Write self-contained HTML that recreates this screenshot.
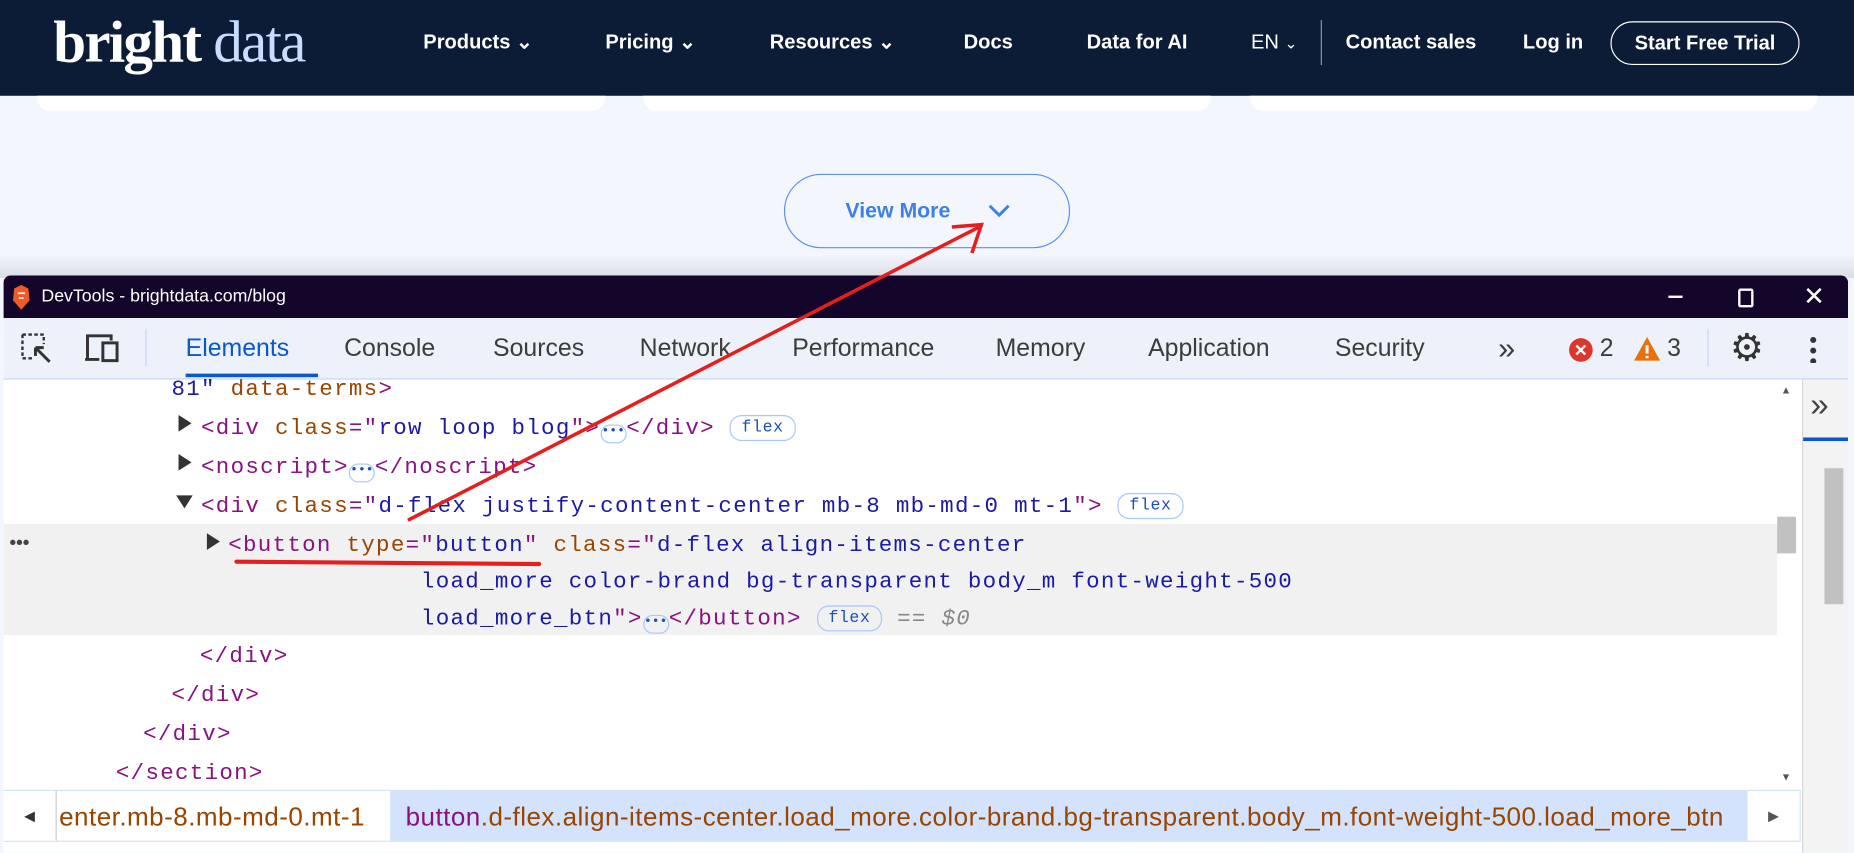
<!DOCTYPE html>
<html><head><meta charset="utf-8"><style>
html,body{margin:0;padding:0;width:1854px;height:852px;overflow:hidden;background:#f3f7fd}
#w{position:absolute;left:0;top:0;width:1568px;height:721px;transform:scale(1.18240);transform-origin:0 0;font-family:"Liberation Sans",sans-serif;background:#f3f7fd;overflow:hidden}
.a{position:absolute;white-space:nowrap}
.nav{position:absolute;left:0;top:0;width:1568px;height:81px;background:#0c1b36}
.ni{position:absolute;top:26px;color:#fff;font-size:17px;font-weight:bold}
.card{position:absolute;top:60px;height:34px;background:#fff;border-radius:0 0 12px 12px}
.tb{position:absolute;top:283px;font-size:21px;color:#3c3c3c}
.c{position:absolute;font-family:"Liberation Mono",monospace;font-size:19px;letter-spacing:1.1px;white-space:nowrap;line-height:24px}
.t{color:#881280}.n{color:#994500}.v{color:#1a1aa6}
.badge{display:inline-block;border:1.5px solid #a8c7fa;border-radius:10px;font-size:14px;color:#1a4fbf;padding:0 9px;line-height:20px;letter-spacing:0.5px;vertical-align:2px}
.dots{display:inline-block;border:1.5px solid #a8c7fa;border-radius:8px;width:20px;height:14px;vertical-align:0;font-size:11px;line-height:10px;text-align:center;color:#1a4fbf;letter-spacing:0}
.tri{position:absolute;width:0;height:0;border-top:7px solid transparent;border-bottom:7px solid transparent;border-left:11px solid #333}
</style></head><body><div id="w">
<div class="nav">
 <div class="a" style="left:45px;top:6px;font-family:'Liberation Serif',serif;font-size:50px;font-weight:bold;color:#fff;letter-spacing:-1.5px">bright <span style="color:#c9dcff;font-weight:normal">data</span></div>
 <div class="ni" style="left:358px">Products ⌄</div>
 <div class="ni" style="left:512px">Pricing ⌄</div>
 <div class="ni" style="left:651px">Resources ⌄</div>
 <div class="ni" style="left:815px">Docs</div>
 <div class="ni" style="left:919px">Data for AI</div>
 <div class="ni" style="left:1058px;font-weight:normal">EN <span style="font-size:13px">⌄</span></div>
 <div class="a" style="left:1117px;top:17px;width:1px;height:38px;background:#8a94a8"></div>
 <div class="ni" style="left:1138px">Contact sales</div>
 <div class="ni" style="left:1288px">Log in</div>
 <div class="a" style="left:1362px;top:18px;width:158px;height:35px;border:1.5px solid #fff;border-radius:20px;color:#fff;font-weight:bold;font-size:17px;text-align:center;line-height:35px">Start Free Trial</div>
</div>
<div class="card" style="left:31px;width:481px;top:81px;height:13px"></div>
<div class="card" style="left:544px;width:480px;top:81px;height:13px"></div>
<div class="card" style="left:1057px;width:480px;top:81px;height:13px"></div>
<div class="a" style="left:663px;top:147px;width:240px;height:61px;border:1.5px solid #5b8ff0;border-radius:32px"></div>
<div class="a" style="left:715px;top:168px;color:#3d7fe9;font-size:18px;font-weight:bold">View More</div>
<svg class="a" style="left:834px;top:170px" width="22" height="16"><path d="M3 4 L11 12 L19 4" fill="none" stroke="#3d7fe9" stroke-width="2.5"/></svg>
<div class="a" style="left:0;top:215px;width:1568px;height:20px;background:linear-gradient(#f3f7fd,#d8dce4)"></div>
<!-- devtools -->
<div class="a" style="left:3px;top:233px;width:1560px;height:488px;background:#fff;border-radius:6px 6px 0 0;overflow:hidden">
 <div class="a" style="left:0;top:0;width:1560px;height:36px;background:#14052a"></div>
 <svg class="a" style="left:7px;top:8px" width="16" height="22"><path d="M2 3 L8 0 L14 3 L15 13 L8 21 L1 13Z" fill="#f05a26"/><path d="M5 7h6M6 11h4" stroke="#fff" stroke-width="1.5"/></svg>
 <div class="a" style="left:32px;top:9px;color:#fff;font-size:15px">DevTools - brightdata.com/blog</div>
 <div class="a" style="left:1408px;top:17px;width:12px;height:2px;background:#fff"></div>
 <div class="a" style="left:1467px;top:11px;width:9px;height:12px;border:2px solid #fff;border-radius:2px"></div>
 <div class="a" style="left:1522px;top:5px;color:#fff;font-size:22px">✕</div>
 <div class="a" style="left:0;top:36px;width:1560px;height:51px;background:#edf2fa;border-bottom:1px solid #c6d6f0"></div>
 <svg class="a" style="left:14px;top:48px" width="30" height="30"><path d="M2 2h18v8M2 2v20h8" fill="none" stroke="#333" stroke-width="2" stroke-dasharray="3 2"/><path d="M13 13 L25 25 M13 13h7M13 13v7" stroke="#333" stroke-width="2.5" fill="none"/></svg>
 <svg class="a" style="left:68px;top:48px" width="34" height="28"><path d="M3 22V3h20v4M1 23h12" fill="none" stroke="#333" stroke-width="2.5"/><rect x="16" y="9" width="12" height="15" fill="none" stroke="#333" stroke-width="2.5"/></svg>
 <div class="a" style="left:120px;top:45px;width:1px;height:32px;background:#c6d6f0"></div>
 <div class="tb" style="left:154px;top:50px;color:#0b57d0">Elements</div>
 <div class="a" style="left:154px;top:83px;width:112px;height:3px;background:#0b57d0"></div>
 <div class="tb" style="left:288px;top:50px">Console</div>
 <div class="tb" style="left:414px;top:50px">Sources</div>
 <div class="tb" style="left:538px;top:50px">Network</div>
 <div class="tb" style="left:667px;top:50px">Performance</div>
 <div class="tb" style="left:839px;top:50px">Memory</div>
 <div class="tb" style="left:968px;top:50px">Application</div>
 <div class="tb" style="left:1126px;top:50px">Security</div>
 <div class="tb" style="left:1264px;top:46px;font-size:26px">»</div>
 <div class="a" style="left:1324px;top:53px;width:20px;height:20px;border-radius:50%;background:#dc362e;color:#fff;font-size:14px;text-align:center;line-height:20px;font-weight:bold">✕</div>
 <div class="tb" style="left:1350px;top:50px">2</div>
 <svg class="a" style="left:1378px;top:51px" width="24" height="22"><path d="M12 1 L23 21 H1Z" fill="#e8710a"/><path d="M12 8v7M12 17v2" stroke="#fff" stroke-width="2.5"/></svg>
 <div class="tb" style="left:1407px;top:50px">3</div>
 <div class="a" style="left:1441px;top:45px;width:1px;height:32px;background:#c6d6f0"></div>
 <div class="a" style="left:1460px;top:42px;font-size:32px;color:#333">⚙</div>
 <div class="a" style="left:1528px;top:50px;width:5px;height:24px;background:radial-gradient(circle,#333 2.4px,transparent 2.6px) 0 0/5px 9px"></div>
 <!-- code -->
 <div class="a" style="left:0;top:210px;width:1500px;height:94px;background:#f1f1f1"></div>
 <div class="a" style="left:5px;top:218px;font-size:16px;color:#444;font-weight:bold">•••</div>
 <div class="c" style="left:142px;top:84px"><span class="v">81"</span> <span class="n">data-terms</span><span class="t">&gt;</span></div>
 <div class="tri" style="left:148px;top:118px"></div>
 <div class="c" style="left:167px;top:117px"><span class="t">&lt;div</span> <span class="n">class</span><span class="t">="</span><span class="v">row loop blog</span><span class="t">"&gt;</span><span class="dots">•••</span><span class="t">&lt;/div&gt;</span> <span class="badge">flex</span></div>
 <div class="tri" style="left:148px;top:151px"></div>
 <div class="c" style="left:167px;top:150px"><span class="t">&lt;noscript&gt;</span><span class="dots">•••</span><span class="t">&lt;/noscript&gt;</span></div>
 <div class="a" style="left:146px;top:186px;border-left:7px solid transparent;border-right:7px solid transparent;border-top:11px solid #333"></div>
 <div class="c" style="left:167px;top:183px"><span class="t">&lt;div</span> <span class="n">class</span><span class="t">="</span><span class="v">d-flex justify-content-center mb-8 mb-md-0 mt-1</span><span class="t">"&gt;</span> <span class="badge">flex</span></div>
 <div class="tri" style="left:172px;top:218px"></div>
 <div class="c" style="left:190px;top:216px"><span class="t">&lt;button</span> <span class="n">type</span><span class="t">="</span><span class="v">button</span><span class="t">"</span> <span class="n">class</span><span class="t">="</span><span class="v">d-flex align-items-center</span></div>
 <div class="c" style="left:353px;top:247px"><span class="v">load_more color-brand bg-transparent body_m font-weight-500</span></div>
 <div class="c" style="left:353px;top:278px"><span class="v">load_more_btn</span><span class="t">"&gt;</span><span class="dots">•••</span><span class="t">&lt;/button&gt;</span> <span class="badge">flex</span> <span style="color:#888;font-style:italic">== $0</span></div>
 <div class="c t" style="left:166px;top:310px">&lt;/div&gt;</div>
 <div class="c t" style="left:142px;top:343px">&lt;/div&gt;</div>
 <div class="c t" style="left:118px;top:376px">&lt;/div&gt;</div>
 <div class="c t" style="left:95px;top:409px">&lt;/section&gt;</div>
 <!-- scrollbar -->
 <div class="a" style="left:1500px;top:88px;width:20px;height:347px;background:#fff"></div>
 <div class="a" style="left:1500px;top:204px;width:16px;height:31px;background:#c1c1c1"></div>
 <div class="a" style="left:1503px;top:92px;font-size:9px;color:#555">▲</div>
 <div class="a" style="left:1503px;top:419px;font-size:9px;color:#555">▼</div>
 <div class="a" style="left:1521px;top:88px;width:39px;height:400px;background:#f3f3f3;border-left:1px solid #d8d8d8"></div>
 <div class="a" style="left:1528px;top:94px;font-size:28px;color:#444">»</div>
 <div class="a" style="left:1522px;top:137px;width:38px;height:3px;background:#0b57d0"></div>
 <div class="a" style="left:1540px;top:163px;width:16px;height:115px;background:#c1c1c1"></div>
 <!-- breadcrumb -->
 <div class="a" style="left:0;top:435px;width:1520px;height:44px;background:#d3e3fd"></div>
 <div class="a" style="left:0;top:436px;width:327px;height:42px;background:#fff"></div>
 <div class="a" style="left:0;top:436px;width:44px;height:42px;background:#fff;border-right:1px solid #ccc;font-size:12px;color:#333;text-align:center;line-height:42px">◀</div>
 <div class="a" style="left:47px;top:445px;font-size:22px;color:#994500;letter-spacing:0.4px">enter.mb-8.mb-md-0.mt-1</div>
 <div class="a" style="left:340px;top:445px;font-size:22px;color:#994500;letter-spacing:0.4px"><span style="color:#881280">button</span>.d-flex.align-items-center.load_more.color-brand.bg-transparent.body_m.font-weight-500.load_more_btn</div>
 <div class="a" style="left:1475px;top:436px;width:44px;height:42px;background:#fff;font-size:12px;color:#555;text-align:center;line-height:42px">▶</div>
</div>
<!-- annotations -->
<svg class="a" style="left:0;top:0" width="1568" height="721">
 <path d="M345 440 L828 192" stroke="#e4201e" stroke-width="3" fill="none"/>
 <path d="M805 192 L830 190 L822 214" stroke="#e4201e" stroke-width="3" fill="none"/>
 <path d="M200 475 L456 477" stroke="#e4201e" stroke-width="3.5" stroke-linecap="round"/>
</svg>
</div></body></html>
